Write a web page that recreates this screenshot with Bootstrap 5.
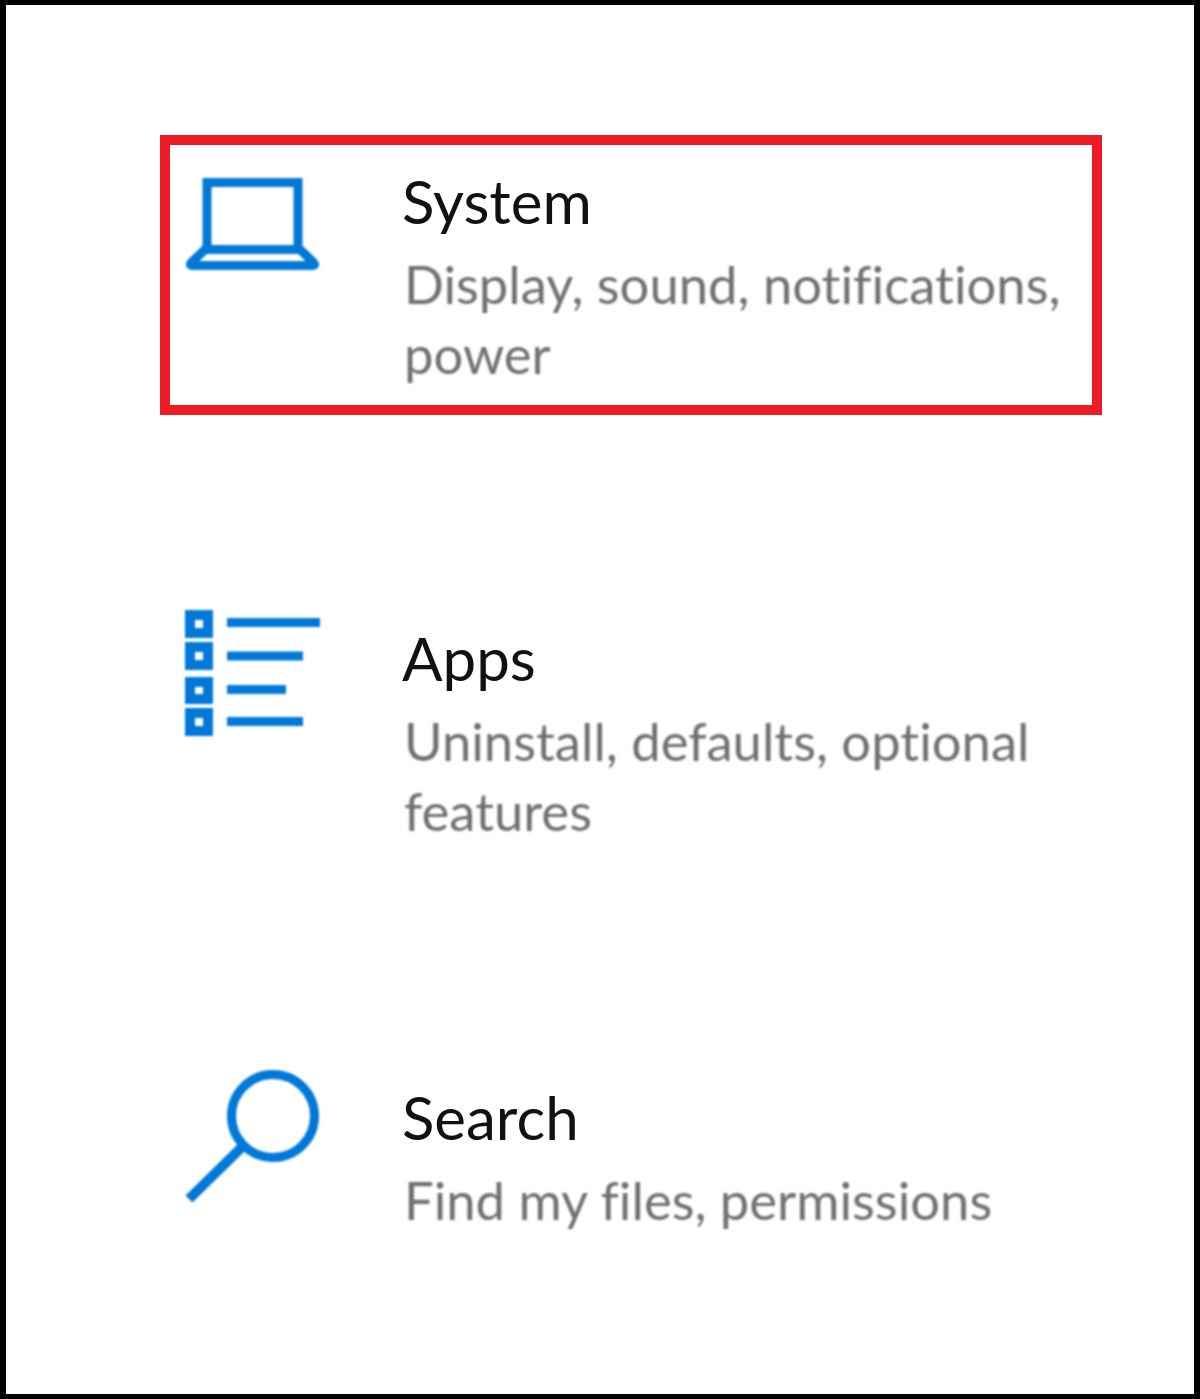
<!DOCTYPE html>
<html lang="en">
<head>
<meta charset="utf-8">
<title>Settings</title>
<link rel="stylesheet" href="https://cdn.jsdelivr.net/npm/bootstrap@5.3.0/dist/css/bootstrap.min.css">
<style>
html,body{height:100%;margin:0;background:#fff}
.frame{box-sizing:border-box;width:1200px;height:1399px;border:solid #000;border-width:5px 6px;padding:130px 0 0 154px;font-family:Lato,"Noto Sans",sans-serif;font-variant-ligatures:none}
.entry{box-sizing:border-box;width:942px;height:280px;border:10px solid transparent;padding-left:15px}
.entry-active{border-color:#ed1c24}
.entry+.entry{margin-top:177px}
.entry:last-child{margin-top:179px}
.glyph{flex:0 0 217px;height:150px}
.glyph svg{display:block;width:135px;height:150px;filter:blur(.8px)}
.entry-title{font-size:60px;line-height:70px;color:#111;margin:21px 0 13px;filter:blur(.7px)}
.entry-sub{font-size:52.600px;line-height:70px;color:#707070;margin:0;padding-left:2px;filter:blur(.8px)}
</style>
</head>
<body>
<main class="frame">
  <section class="entry entry-active d-flex">
    <div class="glyph">
      <svg viewBox="0 0 135 150" fill="none" stroke="#0078d7" stroke-width="9">
        <path d="M22 102V37.500H113V102"/>
        <path d="M20 104.500H115L128 117Q132 121 126 120.500H9Q3 121 7 117Z" stroke-linejoin="round"/>
      </svg>
    </div>
    <div>
      <h2 class="entry-title fw-normal">System</h2>
      <p class="entry-sub">Display, sound, notifications,<br>power</p>
    </div>
  </section>
  <section class="entry d-flex">
    <div class="glyph">
      <svg viewBox="0 0 135 150" fill="none" stroke="#0078d7">
        <g stroke-width="10">
          <rect x="5" y="13" width="18" height="18"/>
          <rect x="5" y="45" width="18" height="18"/>
          <rect x="5" y="80" width="18" height="17"/>
          <rect x="5" y="111" width="18" height="18"/>
        </g>
        <g stroke-width="9">
          <path d="M42 20.500H135"/>
          <path d="M42 54H118"/>
          <path d="M42 87.500H101"/>
          <path d="M42 119.500H118"/>
        </g>
      </svg>
    </div>
    <div>
      <h2 class="entry-title fw-normal">Apps</h2>
      <p class="entry-sub">Uninstall, defaults, optional<br>features</p>
    </div>
  </section>
  <section class="entry d-flex">
    <div class="glyph">
      <svg viewBox="0 0 135 150" fill="none" stroke="#0078d7" stroke-width="9">
        <circle cx="88" cy="55" r="41.500"/>
        <path d="M57 86L4 138" stroke-width="10"/>
      </svg>
    </div>
    <div>
      <h2 class="entry-title fw-normal">Search</h2>
      <p class="entry-sub">Find my files, permissions</p>
    </div>
  </section>
</main>
<script src="https://cdn.jsdelivr.net/npm/bootstrap@5.3.0/dist/js/bootstrap.bundle.min.js"></script>
</body>
</html>
